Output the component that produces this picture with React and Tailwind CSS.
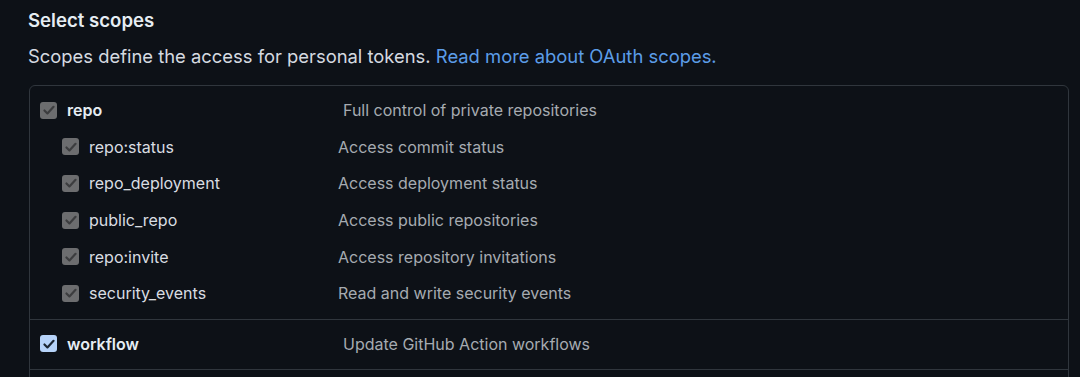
import React from "react";

const font = { fontFamily: "Inter, 'Liberation Sans', sans-serif" };

function Check({ tone }) {
  const box = tone === "blue" ? "bg-[#b6d3f9]" : "bg-[#6c6d6f]";
  const stroke = tone === "blue" ? "#1b2633" : "#3c3d3f";
  return (
    <span className={`w-[17px] h-[17px] rounded-[3px] flex items-center justify-center shrink-0 ${box}`}>
      <svg width="14" height="14" viewBox="0 0 16 16" fill="none">
        <path d="M2.8 8.6l3.4 3.3L13.2 4.4" stroke={stroke} strokeWidth="2.5" strokeLinecap="round" strokeLinejoin="round" />
      </svg>
    </span>
  );
}

function ScopeRow({ name, desc, child, tone }) {
  return (
    <div className="flex items-center h-[36.6px]">
      <div className={`flex items-center gap-[10px] ${child ? "pl-[32px] w-[308px]" : "pl-[10px] w-[313px]"}`}>
        <Check tone={tone} />
        <span className={child ? "text-[16px] text-[#d9dde2]" : "text-[16px] font-semibold text-[#e6edf3]"}>
          {name}
        </span>
      </div>
      <span className="text-[16px] text-[#a6abb1]">{desc}</span>
    </div>
  );
}

const repoScopes = [
  ["repo:status", "Access commit status"],
  ["repo_deployment", "Access deployment status"],
  ["public_repo", "Access public repositories"],
  ["repo:invite", "Access repository invitations"],
  ["security_events", "Read and write security events"]
];

export default function App() {
  return (
    <div className="h-[377px] overflow-hidden bg-[#0d1117] pl-[28px] pt-[8px]" style={font}>
      <div className="h-[24px] leading-[24px] text-[18.6px] font-semibold text-[#e6edf3]">Select scopes</div>
      <div className="mt-[12px] h-[24px] leading-[24px] text-[18.4px] text-[#d5dae0]">
        Scopes define the access for personal tokens.{" "}
        <span className="text-[#5c9de8]">Read more about OAuth scopes.</span>
      </div>
      <div className="mt-[17px] ml-px w-[1040px] border border-[#30363d] rounded-t-md">
        <div className="pt-[6px] pb-[7px]">
          <ScopeRow name="repo" desc="Full control of private repositories" />
          {repoScopes.map(([n, d]) => (
            <ScopeRow key={n} name={n} desc={d} child />
          ))}
        </div>
        <div className="border-t border-[#30363d] pt-[6px] pb-[7px]">
          <ScopeRow name="workflow" desc="Update GitHub Action workflows" tone="blue" />
        </div>
        <div className="border-t border-[#30363d] h-[50px]" />
      </div>
    </div>
  );
}
